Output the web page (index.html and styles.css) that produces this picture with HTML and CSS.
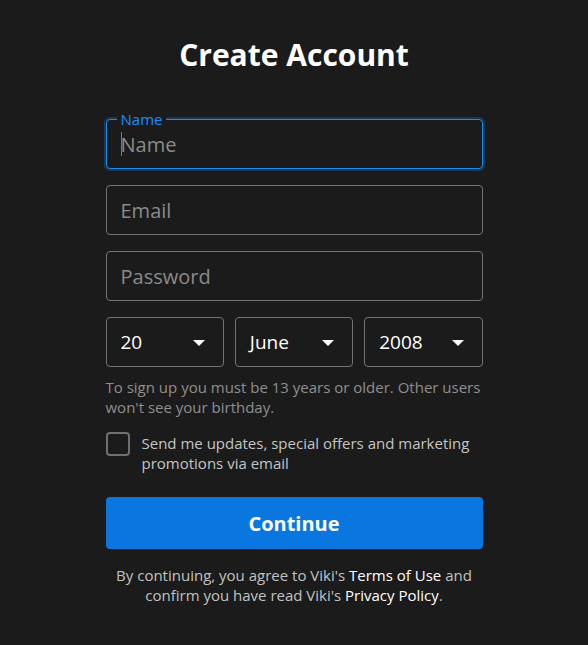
FILE: index.html
```html
<!DOCTYPE html>
<html lang="en">
<head>
<meta charset="utf-8">
<title>Create Account</title>
<link rel="stylesheet" href="styles.css">
</head>
<body>
<main class="page">
  <h1 class="title">Create Account</h1>
  <form class="form">
    <div class="field field-focused">
      <label class="float-label" for="name">Name</label>
      <span class="caret"></span>
      <input class="input" id="name" type="text" placeholder="Name">
    </div>
    <div class="field">
      <input class="input" type="email" placeholder="Email">
    </div>
    <div class="field">
      <input class="input" type="password" placeholder="Password">
    </div>
    <div class="dob">
      <div class="select"><span>20</span><span class="arrow"></span></div>
      <div class="select"><span>June</span><span class="arrow"></span></div>
      <div class="select"><span>2008</span><span class="arrow"></span></div>
    </div>
    <p class="hint">To sign up you must be 13 years or older. Other users won't see your birthday.</p>
    <label class="check">
      <span class="box"></span>
      <span class="check-text">Send me updates, special offers and marketing promotions via email</span>
    </label>
    <button class="btn" type="button">Continue</button>
    <p class="legal">By continuing, you agree to Viki's <a href="#">Terms of Use</a> and confirm you have read Viki's <a href="#">Privacy Policy</a>.</p>
  </form>
</main>
</body>
</html>
```
FILE: styles.css
```css
* { box-sizing: border-box; }
html, body { margin: 0; padding: 0; background: #1b1b1b; }
body { font-family: "Open Sans", "Noto Sans", sans-serif; color: #fff; }
.page { width: 377px; margin: 0 auto; padding-top: 32px; }
.title { margin: 0; font-size: 30px; font-weight: 700; text-align: center; line-height: 46px; }
.form { margin-top: 41px; display: flex; flex-direction: column; }
.field { position: relative; height: 50px; border: 1px solid #747474; border-radius: 4px; margin-bottom: 16px; }
.field-focused { border-color: #1a8cf0; box-shadow: 0 0 0 2px rgba(20, 110, 200, 0.35); }
.input { width: 100%; height: 100%; background: transparent; border: 0; outline: none; padding: 0 14px; font-family: inherit; font-size: 20px; color: #fff; }
.input::placeholder { color: #8a8a8a; }
.float-label { position: absolute; left: 10px; top: -10px; padding: 0 4px; background: #1b1b1b; color: #1a8cff; font-size: 15px; line-height: 18px; }
.caret { position: absolute; left: 14px; top: 12px; width: 1px; height: 24px; background: #1a8cff; }
.dob { display: grid; grid-template-columns: repeat(3, 1fr); gap: 11px; }
.select { height: 50px; border: 1px solid #747474; border-radius: 4px; display: flex; align-items: center; justify-content: space-between; padding: 0 18px 0 14px; font-size: 19px; }
.arrow { width: 0; height: 0; margin-top: 1px; border-left: 6px solid transparent; border-right: 6px solid transparent; border-top: 6px solid #fff; }
.hint { margin: 10px 0 0; font-size: 15px; line-height: 20px; color: #8f8f8f; }
.check { display: flex; align-items: flex-start; gap: 12px; margin-top: 15px; }
.box { flex: none; width: 24px; height: 24px; border: 2px solid #707070; border-radius: 4px; }
.check-text { font-size: 15px; line-height: 20px; color: #c4c4c4; margin-top: 1px; }
.btn { margin-top: 24px; height: 52px; border: 0; border-radius: 4px; background: #0a77e0; color: #fff; font-family: inherit; font-size: 20px; font-weight: 700; }
.legal { margin: 16px 0 0; text-align: center; font-size: 15px; line-height: 20px; color: #c2c2c2; }
.legal a { color: #fff; text-decoration: none; }
```
